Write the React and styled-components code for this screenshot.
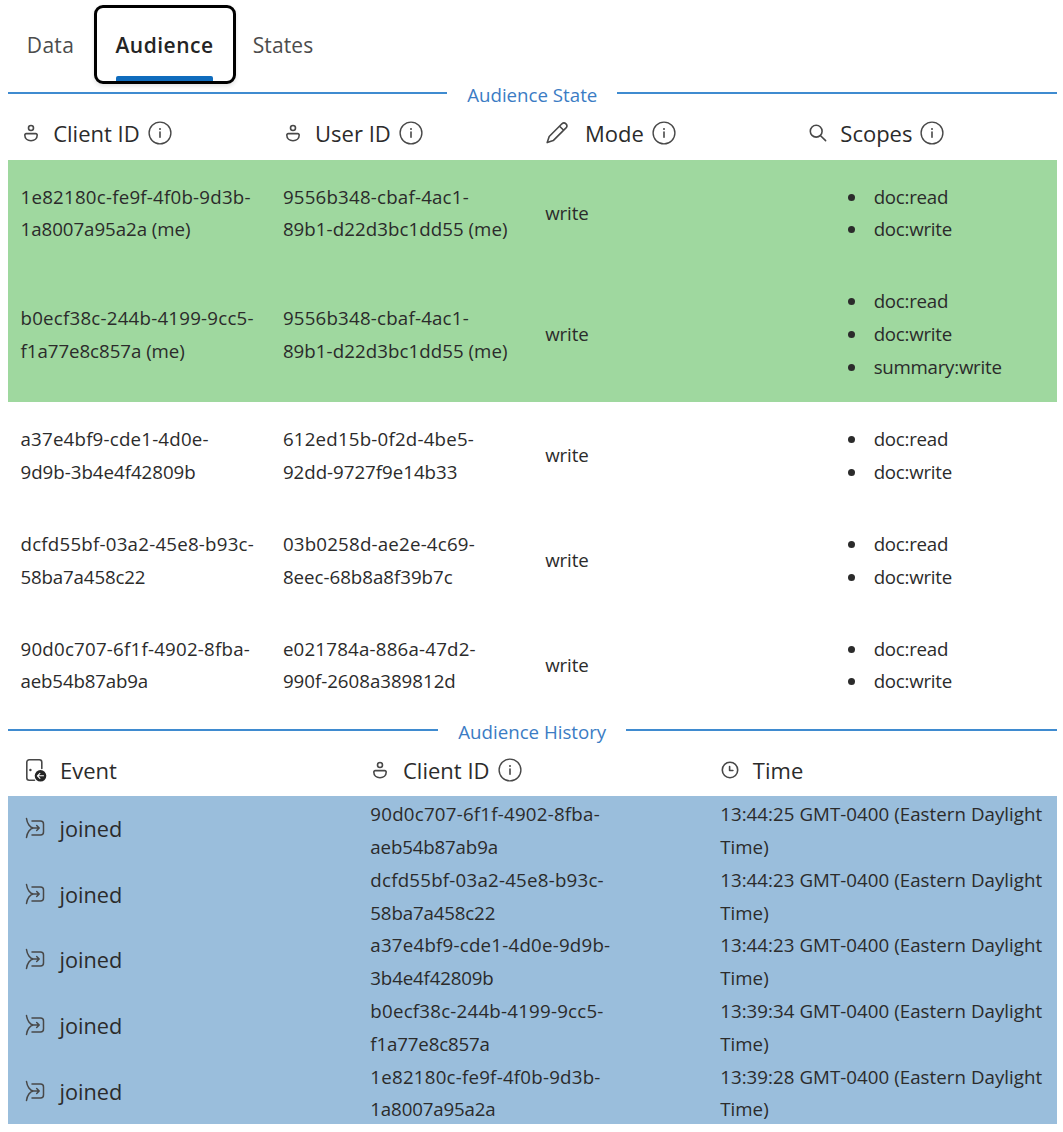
import React from "react";
import styled, { createGlobalStyle } from "styled-components";

const GlobalStyle = createGlobalStyle`
  * { box-sizing: border-box; }
  body {
    margin: 0;
    background: #fff;
    color: #2b2b2b;
    font-family: "Open Sans", "Noto Sans", sans-serif;
  }
`;

const Panel = styled.main`
  width: 1063px;
  height: 1132px;
  padding: 5px 6px 0 7.5px;
  overflow: hidden;
`;

const TabList = styled.div`
  display: flex;
  height: 79px;
`;

const Tab = styled.button`
  display: flex;
  flex-direction: column;
  align-items: center;
  justify-content: flex-end;
  flex: none;
  width: ${(p) => p.$width}px;
  padding: 0;
  border: ${(p) => (p.$active ? "3px solid #000" : "3px solid transparent")};
  border-radius: 9px;
  background: transparent;
  box-shadow: ${(p) => (p.$active ? "0 2px 4px rgba(0, 0, 0, 0.12)" : "none")};
  color: ${(p) => (p.$active ? "#242424" : "#4c4c4c")};
  font-family: inherit;
  font-size: 21px;
  font-weight: ${(p) => (p.$active ? 600 : 400)};
  line-height: 28px;
  letter-spacing: ${(p) => p.$tracking}px;
  white-space: nowrap;
`;

const TabLabel = styled.span`
  margin-bottom: ${(p) => (p.$active ? 17 : 22)}px;
`;

const TabMarker = styled.span`
  width: 97px;
  height: 5px;
  border-radius: 2px 2px 0 0;
  background: #0f6cbd;
`;

const Divider = styled.div`
  display: flex;
  align-items: center;
  gap: 20px;
  height: 22px;
  margin-top: ${(p) => p.$offset || 0}px;
  color: #3b7cc4;
  font-size: 18.7px;
  line-height: 22px;
  white-space: nowrap;

  &::before,
  &::after {
    content: "";
    flex: 1;
    height: 2px;
    margin-bottom: 4px;
    background: #3f8bd0;
  }
`;

const Columns = styled.div`
  display: grid;
  grid-template-columns: repeat(${(p) => p.$count}, 1fr);
`;

const HeaderRow = styled(Columns)`
  height: ${(p) => p.$height}px;
`;

const HeaderCell = styled.div`
  display: flex;
  align-items: center;
  padding-left: ${(p) => p.$inset || 13}px;
  font-size: 22px;
  white-space: nowrap;
`;

const HeaderLabel = styled.span`
  margin: 0 8px 0 ${(p) => p.$gap}px;
`;

const StateRow = styled(Columns)`
  align-items: center;
  background: ${(p) => (p.$mine ? "#9fd89f" : "transparent")};
`;

const HistoryRow = styled(Columns)`
  align-items: start;
  height: 65.6px;
  background: #9abedc;
`;

const Text = styled.div`
  padding: 2px 0 0 13px;
  font-size: 18.7px;
  line-height: 32.8px;
  white-space: nowrap;
`;

const Line = styled.div`
  letter-spacing: ${(p) => p.$tracking}px;
`;

const Scopes = styled.ul`
  margin: 0;
  padding: 20.7px 0 18.5px 53.5px;
  list-style: none;
`;

const Scope = styled.li`
  display: flex;
  align-items: center;
  gap: 18.5px;
  font-size: 18.7px;
  line-height: 32.8px;
  letter-spacing: -0.25px;

  &::before {
    content: "";
    width: 7px;
    height: 7px;
    border-radius: 50%;
    background: #2b2b2b;
  }
`;

const EventCell = styled.div`
  display: flex;
  align-items: center;
  gap: 15px;
  height: 64px;
  padding-left: 17px;
  font-size: 21.7px;
`;

const EventName = styled.span`
  padding-top: 1px;
`;

const Svg = styled.svg`
  flex: none;
  display: block;
  fill: none;
  stroke: #484848;
  stroke-width: ${(p) => p.$weight || 1.6};
  stroke-linecap: round;
  stroke-linejoin: round;
`;

const InfoIcon = () => (
  <Svg width="24" height="24" viewBox="0 0 24 24" $weight={1.4}>
    <circle cx="12" cy="12" r="10.9" />
    <path d="M12 11v5.2" strokeWidth="1.6" />
    <circle cx="12" cy="8.1" r="1" fill="#484848" stroke="none" />
  </Svg>
);

const PersonIcon = () => (
  <Svg width="20" height="20" viewBox="0 0 20 20">
    <circle cx="10" cy="5" r="2.5" />
    <path d="M5.2 10.6h9.6a1.4 1.4 0 0 1 1.4 1.4c0 3.6-2.7 5.7-6.200 5.700s-6.200-2.100-6.200-5.700a1.400 1.400 0 0 1 1.400-1.400Z" />
  </Svg>
);

const PencilIcon = () => (
  <Svg width="24" height="24" viewBox="0 0 24 24">
    <path d="M16.9 2.800a2.900 2.900 0 0 1 4.100 4.100L8.200 19.600 2.200 21.600l2-6.100ZM14.600 5.200l4.100 4.100" />
  </Svg>
);

const SearchIcon = () => (
  <Svg width="20" height="20" viewBox="0 0 20 20">
    <circle cx="8.2" cy="8.2" r="5.9" />
    <path d="m12.6 12.7 5 4.9" />
  </Svg>
);

const ClockIcon = () => (
  <Svg width="20" height="20" viewBox="0 0 20 20">
    <circle cx="10" cy="10" r="7.7" />
    <path d="M9.6 6.5v4h3.3" />
  </Svg>
);

const DoorIcon = () => (
  <Svg width="24" height="26" viewBox="0 0 24 26">
    <path d="M9.5 23.2H4.200a2.400 2.400 0 0 1-2.400-2.400V5.200a2.400 2.400 0 0 1 2.400-2.400h10.200a2.400 2.400 0 0 1 2.400 2.400v6.300" />
    <circle cx="5.400" cy="13" r="1.200" fill="#424242" stroke="none" />
    <circle cx="15.500" cy="18.800" r="5.800" fill="#242424" stroke="none" />
    <path d="M18.500 18.800h-6m2.400-2.500-2.500 2.500 2.500 2.500" stroke="#fff" strokeWidth="1.100" />
  </Svg>
);

const JoinIcon = () => (
  <Svg width="20" height="22" viewBox="0 0 20 22" $weight={1.5}>
    <path d="M1.500 1.500c.6 4.800 3.500 9.300 7 9.500h5.500M1.500 20.500c.6-4.800 3.500-9.300 7-9.500M11.700 8.500l2.500 2.500-2.500 2.500" />
    <path d="M7 4h8.500a3 3 0 0 1 3 3v8a3 3 0 0 1-3 3H7" />
  </Svg>
);

// Hyphens and the "(me)" suffix get extra room, spread over the whole line.
const idTracking = (line) => {
  const hyphens = line.split("-").length - 1;
  const base = line.endsWith("(me)") ? -0.04 : -0.15;
  return Math.round((base + (2.3 * hyphens) / line.length) * 100) / 100;
};

const Lines = ({ of }) => (
  <Text>
    {of.map((line) => (
      <Line key={line} $tracking={idTracking(line)}>{line}</Line>
    ))}
  </Text>
);

const members = [
  { mine: true, client: ["1e82180c-fe9f-4f0b-9d3b-", "1a8007a95a2a (me)"], user: ["9556b348-cbaf-4ac1-", "89b1-d22d3bc1dd55 (me)"], scopes: ["doc:read", "doc:write"] },
  { mine: true, client: ["b0ecf38c-244b-4199-9cc5-", "f1a77e8c857a (me)"], user: ["9556b348-cbaf-4ac1-", "89b1-d22d3bc1dd55 (me)"], scopes: ["doc:read", "doc:write", "summary:write"] },
  { client: ["a37e4bf9-cde1-4d0e-", "9d9b-3b4e4f42809b"], user: ["612ed15b-0f2d-4be5-", "92dd-9727f9e14b33"], scopes: ["doc:read", "doc:write"] },
  { client: ["dcfd55bf-03a2-45e8-b93c-", "58ba7a458c22"], user: ["03b0258d-ae2e-4c69-", "8eec-68b8a8f39b7c"], scopes: ["doc:read", "doc:write"] },
  { client: ["90d0c707-6f1f-4902-8fba-", "aeb54b87ab9a"], user: ["e021784a-886a-47d2-", "990f-2608a389812d"], scopes: ["doc:read", "doc:write"] },
];

const history = [
  { client: ["90d0c707-6f1f-4902-8fba-", "aeb54b87ab9a"], time: "13:44:25" },
  { client: ["dcfd55bf-03a2-45e8-b93c-", "58ba7a458c22"], time: "13:44:23" },
  { client: ["a37e4bf9-cde1-4d0e-9d9b-", "3b4e4f42809b"], time: "13:44:23" },
  { client: ["b0ecf38c-244b-4199-9cc5-", "f1a77e8c857a"], time: "13:39:34" },
  { client: ["1e82180c-fe9f-4f0b-9d3b-", "1a8007a95a2a"], time: "13:39:28" },
];

export default function App() {
  return (
    <Panel>
      <GlobalStyle />
      <TabList role="tablist">
        <Tab $width={86} $tracking={0.3}><TabLabel>Data</TabLabel></Tab>
        <Tab $width={142} $tracking={0.5} $active>
          <TabLabel $active>Audience</TabLabel>
          <TabMarker />
        </Tab>
        <Tab $width={95} $tracking={0.1}><TabLabel>States</TabLabel></Tab>
      </TabList>

      <Divider>Audience State</Divider>
      <HeaderRow $count={4} $height={54}>
        <HeaderCell><PersonIcon /><HeaderLabel $gap={12.7}>Client ID</HeaderLabel><InfoIcon /></HeaderCell>
        <HeaderCell><PersonIcon /><HeaderLabel $gap={12.2}>User ID</HeaderLabel><InfoIcon /></HeaderCell>
        <HeaderCell><PencilIcon /><HeaderLabel $gap={15.7}>Mode</HeaderLabel><InfoIcon /></HeaderCell>
        <HeaderCell><SearchIcon /><HeaderLabel $gap={12.7}>Scopes</HeaderLabel><InfoIcon /></HeaderCell>
      </HeaderRow>
      {members.map((m) => (
        <StateRow key={m.client[0]} $count={4} $mine={m.mine}>
          <Lines of={m.client} />
          <Lines of={m.user} />
          <Lines of={["write"]} />
          <Scopes>{m.scopes.map((s) => <Scope key={s}>{s}</Scope>)}</Scopes>
        </StateRow>
      ))}

      <Divider $offset={4.5}>Audience History</Divider>
      <HeaderRow $count={3} $height={53}>
        <HeaderCell $inset={17}><DoorIcon /><HeaderLabel $gap={11.5}>Event</HeaderLabel></HeaderCell>
        <HeaderCell><PersonIcon /><HeaderLabel $gap={12.7}>Client ID</HeaderLabel><InfoIcon /></HeaderCell>
        <HeaderCell><ClockIcon /><HeaderLabel $gap={12.7}>Time</HeaderLabel></HeaderCell>
      </HeaderRow>
      {history.map((h) => (
        <HistoryRow key={h.client[0]} $count={3}>
          <EventCell><JoinIcon /><EventName>joined</EventName></EventCell>
          <Lines of={h.client} />
          <Text>
            <Line $tracking={0.05}>{`${h.time} GMT-0400 (Eastern Daylight`}</Line>
            <Line $tracking={0.05}>Time)</Line>
          </Text>
        </HistoryRow>
      ))}
    </Panel>
  );
}
